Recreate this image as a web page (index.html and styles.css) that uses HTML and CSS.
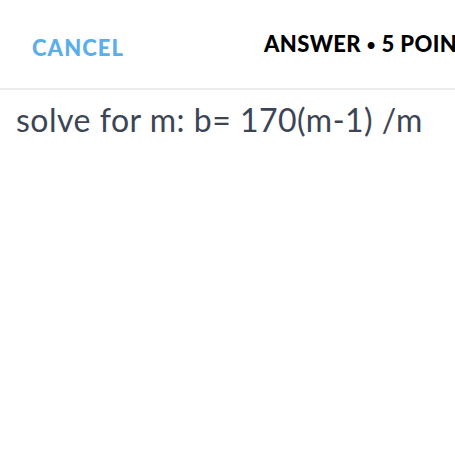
FILE: index.html
```html
<!DOCTYPE html>
<html>
<head>
<meta charset="utf-8">
<link rel="stylesheet" href="styles.css">
</head>
<body>
<div class="page">
  <header class="topbar">
    <span class="cancel">CANCEL</span>
    <span class="title">ANSWER <span class="dot">•</span> 5 POINTS</span>
  </header>
  <div class="question">solve for m: b= 170(m-1) /m</div>
</div>
</body>
</html>
```
FILE: styles.css
```css
html, body {
  margin: 0;
  padding: 0;
  background: #ffffff;
}
.page {
  width: 455px;
  height: 455px;
  overflow: hidden;
  font-family: "Lato", "Liberation Sans", sans-serif;
}
.topbar {
  height: 90px;
  border-bottom: 2px solid #ececec;
  display: flex;
  align-items: flex-start;
  padding: 30px 0 0 32px;
  white-space: nowrap;
  box-sizing: border-box;
  overflow: hidden;
}
.cancel {
  color: #5aaee9;
  font-weight: 900;
  font-size: 22px;
  letter-spacing: 1.1px;
  width: 232px;
  flex: none;
  margin-top: 4px;
}
.title {
  color: #000000;
  font-weight: 900;
  font-size: 22px;
  letter-spacing: 0.4px;
  flex: none;
}
.dot {
  font-size: 15px;
  vertical-align: 2px;
}
.question {
  padding: 10px 16px;
  color: #3c4556;
  font-size: 32px;
  letter-spacing: 0.5px;
  white-space: nowrap;
}
```
